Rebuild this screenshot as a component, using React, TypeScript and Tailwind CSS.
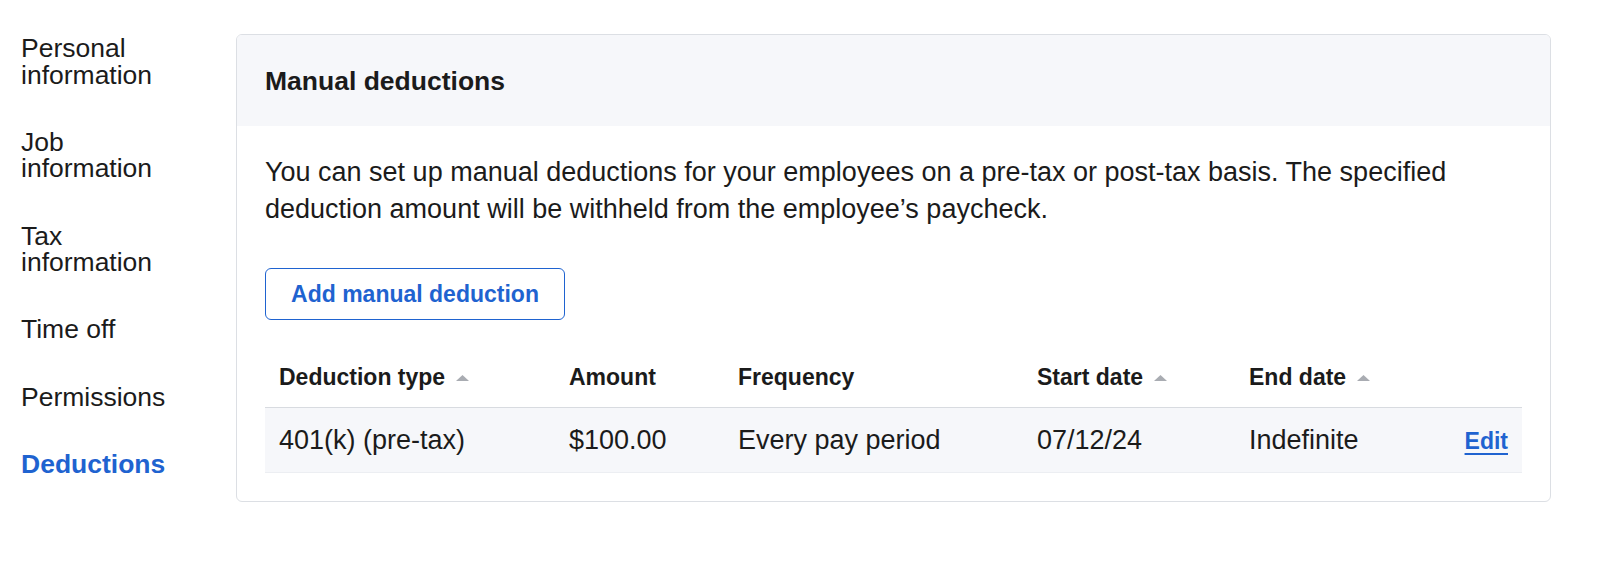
import { useState } from 'react';

const navItems = [
  'Personal information',
  'Job information',
  'Tax information',
  'Time off',
  'Permissions',
  'Deductions',
];

const SortArrow = () => (
  <svg width="13" height="6" viewBox="0 0 13 6" className="ml-[11px] mt-[2px] shrink-0" fill="#a9acb2">
    <path d="M6.5 0L13 6H0Z" />
  </svg>
);

const App = () => {
  const [active] = useState('Deductions');

  return (
    <div className="flex min-h-[567px] bg-white pt-[34px] text-[#1b1b1b] font-['Liberation_Sans',Arial,sans-serif]">
      {/* Sidebar */}
      <nav className="w-[236px] shrink-0 pl-[21px] pt-[1px]">
        <ul className="flex w-[165px] flex-col gap-[40.8px]">
          {navItems.map((item) => (
            <li
              key={item}
              className={`text-[26.5px] leading-[26.5px] ${
                item === active ? 'font-bold text-[#1f63d0]' : 'text-[#1b1b1b]'
              }`}
            >
              {item}
            </li>
          ))}
        </ul>
      </nav>

      {/* Card */}
      <div className="h-fit w-[1315px] shrink-0 overflow-hidden rounded-[6px] border border-[#dcdfe4]">
        <div className="flex h-[91px] items-center bg-[#f6f7fa] px-7 pt-[3px]">
          <h2 className="text-[26.5px] font-bold">Manual deductions</h2>
        </div>

        <div className="p-7">
          <p className="text-[27px] leading-[36.5px]">
            You can set up manual deductions for your employees on a pre-tax or post-tax basis. The specified
            deduction amount will be withheld from the employee’s paycheck.
          </p>

          <button className="mt-[41px] flex h-[52px] w-[300px] items-center justify-center rounded-[6px] border border-[#1f63d0] text-[23px] font-bold text-[#1f63d0]">
            Add manual deduction
          </button>

          {/* Table */}
          <div className="mt-[27px]">
            <div className="grid h-[61px] grid-cols-[290px_169px_299px_212px_1fr_auto] items-center border-b border-[#d8dbe0] text-[23px] font-bold">
              <div className="flex items-center pl-[14px]">
                Deduction type
                <SortArrow />
              </div>
              <div className="pl-[14px]">Amount</div>
              <div className="pl-[14px]">Frequency</div>
              <div className="flex items-center pl-[14px]">
                Start date
                <SortArrow />
              </div>
              <div className="flex items-center pl-[14px]">
                End date
                <SortArrow />
              </div>
              <div />
            </div>
            <div className="grid h-[65px] grid-cols-[290px_169px_299px_212px_1fr_auto] items-center border-b border-[#eceef2] bg-[#f6f7fa] text-[27px]">
              <div className="pl-[14px]">401(k) (pre-tax)</div>
              <div className="pl-[14px]">$100.00</div>
              <div className="pl-[14px]">Every pay period</div>
              <div className="pl-[14px]">07/12/24</div>
              <div className="pl-[14px]">Indefinite</div>
              <a
                href="#"
                className="pr-[14px] pt-[2px] text-[23px] font-bold text-[#1f63d0] underline decoration-2 underline-offset-[4px]"
              >
                Edit
              </a>
            </div>
          </div>
        </div>
      </div>
    </div>
  );
};

export default App;
